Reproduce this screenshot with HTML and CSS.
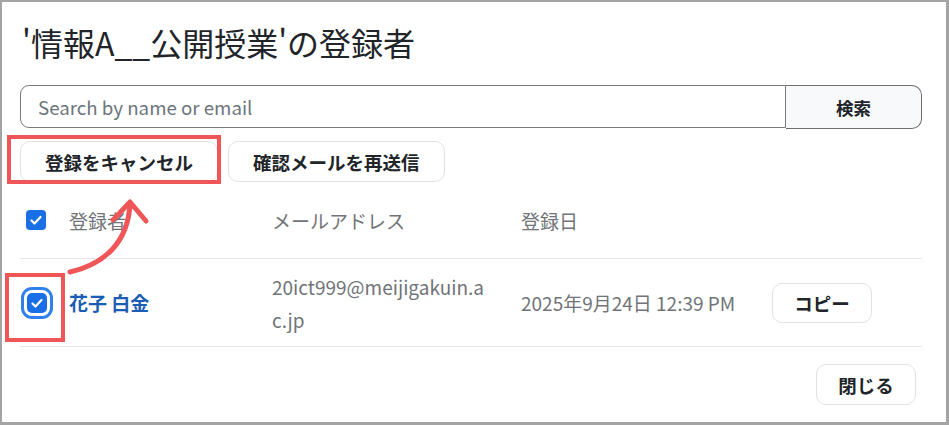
FILE: index.html
```html
<!DOCTYPE html>
<html lang="ja">
<head>
    <meta charset="utf-8">
    <link rel="stylesheet" href="styles.css">
</head>
<body>
    <div class="modal">
        <h1 class="title">'情報A__公開授業'の登録者</h1>

        <div class="searchRow">
            <input class="searchInput" type="text" placeholder="Search by name or email">
            <button class="searchButton">検索</button>
        </div>

        <div class="actionRow">
            <button class="plainButton">登録をキャンセル</button>
            <button class="plainButton">確認メールを再送信</button>
        </div>

        <div class="tableRow headRow">
            <div class="cellCheck"><span class="check"><svg viewBox="0 0 20 20"><path d="M5.5 10.5l3 3 6-6.5"/></svg></span></div>
            <div>登録者</div>
            <div>メールアドレス</div>
            <div>登録日</div>
            <div></div>
        </div>
        <div class="tableRow bodyRow">
            <div class="cellCheck"><span class="check focused"><svg viewBox="0 0 20 20"><path d="M5.5 10.5l3 3 6-6.5"/></svg></span></div>
            <div class="name">花子 白金</div>
            <div class="email"><span>20ict999@meijigakuin.ac.jp</span></div>
            <div class="date">2025年9月24日 12:39 PM</div>
            <div><button class="plainButton copyButton">コピー</button></div>
        </div>

        <div class="footer">
            <button class="plainButton closeButton">閉じる</button>
        </div>

        <!-- annotations drawn over the screenshot -->
        <div class="mark markButton"></div>
        <div class="mark markCheck"></div>
        <svg class="arrow" width="100" height="95" viewBox="0 0 100 95">
            <path d="M10 87 C45 79 68 57 70 19"/>
            <path d="M53 35 L70 17 L86 36"/>
        </svg>
    </div>
</body>
</html>
```

FILE: styles.css
```css
body
{
    margin: 0;
    background: #fff;
}
.modal
{
    position: relative;
    box-sizing: border-box;
    width: 949px;
    height: 425px;
    border-style: solid;
    border-color: #a4a4a4;
    border-width: 2px 3px 3px 2px;
    padding: 0 24px 0 18px;
    font-family: "Noto Sans CJK JP", "Noto Sans", sans-serif;
    color: #212529;
}
.title
{
    margin: 19px 0 0 2px;
    font-size: 32px;
    font-weight: 400;
    line-height: 42px;
}
.searchRow
{
    display: flex;
    margin-top: 22px;
}
.searchInput
{
    flex: 1;
    height: 43px;
    box-sizing: border-box;
    border: 1px solid #7a7a7a;
    border-radius: 9px 0 0 9px;
    padding: 0 17px;
    font-family: inherit;
    font-size: 18.7px;
    color: #212529;
    outline: none;
}
.searchInput::placeholder
{
    color: #6c757d;
}
.searchButton
{
    width: 136px;
    height: 44px;
    box-sizing: border-box;
    border: 1px solid #6f6f6f;
    border-left: none;
    border-radius: 0 10px 10px 0;
    background: #f8f9fa;
    font-family: inherit;
    font-size: 17.5px;
    font-weight: 700;
    color: #212529;
}
.actionRow
{
    display: flex;
    gap: 10px;
    margin-top: 12px;
}
.plainButton
{
    height: 41px;
    box-sizing: border-box;
    padding: 0 24px;
    border: 1px solid #e0e3e6;
    border-radius: 10px;
    background: #fff;
    font-family: inherit;
    font-size: 18.5px;
    font-weight: 700;
    color: #212529;
}
.tableRow
{
    display: grid;
    grid-template-columns: 49px 203px 249px 251px 1fr;
    align-items: center;
    border-bottom: 1px solid #e6e6e6;
    font-size: 19px;
    color: #707478;
}
.headRow
{
    height: 76px;
}
.bodyRow
{
    height: 87px;
}
.cellCheck
{
    padding-left: 6px;
}
.check
{
    display: block;
    width: 20px;
    height: 20px;
    border-radius: 4px;
    background: #1a6ee6;
}
.check svg
{
    display: block;
    width: 20px;
    height: 20px;
    fill: none;
    stroke: #fff;
    stroke-width: 2.2;
    stroke-linecap: round;
    stroke-linejoin: round;
}
.focused
{
    margin-left: 1px;
    box-shadow: 0 0 0 3px #fff, 0 0 0 6px #2f80ec;
    border-radius: 5px;
}
.name
{
    color: #1b5db3;
    font-weight: 700;
}
.email
{
    line-height: 33px;
}
.email span
{
    display: block;
    max-width: 222px;
    word-break: break-all;
}
.copyButton
{
    width: 100px;
    height: 40px;
    padding: 0;
}
.footer
{
    display: flex;
    justify-content: flex-end;
    margin-top: 17px;
    padding-right: 6px;
}
.closeButton
{
    width: 100px;
    padding: 0;
}
.mark
{
    position: absolute;
    box-sizing: border-box;
    border: 4px solid #ef5658;
}
.markButton
{
    left: 5px;
    top: 133px;
    width: 214px;
    height: 49px;
}
.markCheck
{
    left: 3px;
    top: 271px;
    width: 60px;
    height: 69px;
}
.arrow
{
    position: absolute;
    left: 58px;
    top: 183px;
    fill: none;
    stroke: #ef5658;
    stroke-width: 5;
    stroke-linecap: round;
    stroke-linejoin: round;
}
```
